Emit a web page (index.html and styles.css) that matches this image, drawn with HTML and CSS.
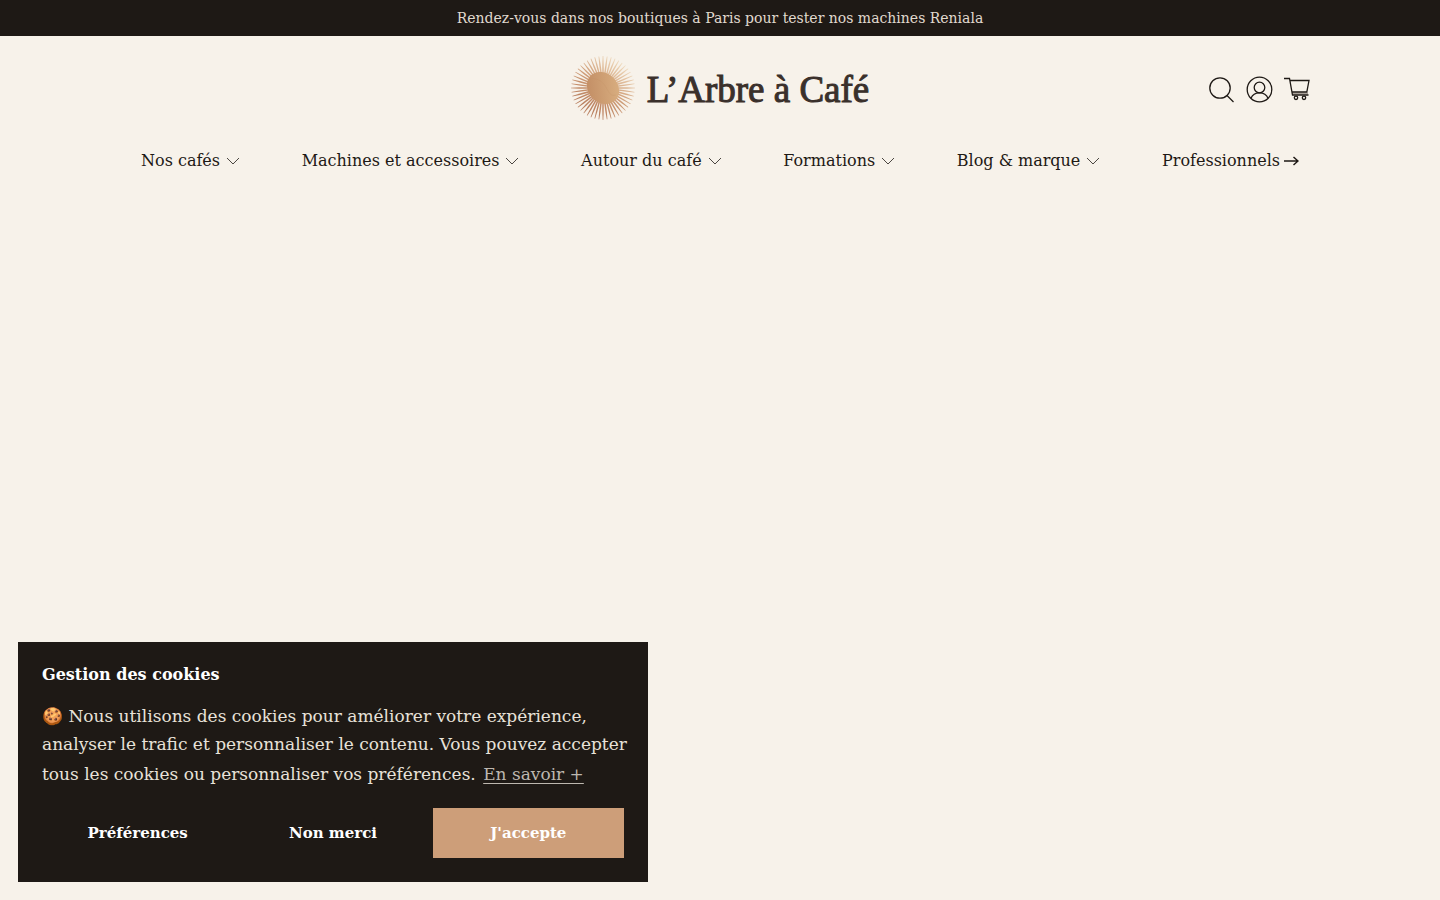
FILE: index.html
```html
<!DOCTYPE html>
<html lang="fr">
<head>
<meta charset="utf-8">
<meta name="viewport" content="width=device-width, initial-scale=1">
<title>L’Arbre à Café</title>
<link rel="stylesheet" href="styles.css">
</head>
<body>
<p class="announcement">Rendez-vous dans nos boutiques à Paris pour tester nos machines Reniala</p>
<header class="header">
  <div class="header-top">
    <a class="logo" href="#">
      <svg class="logo-mark" viewBox="-32 -32 64 64" aria-hidden="true">
        <defs>
          <linearGradient id="rays-fill" gradientUnits="userSpaceOnUse" x1="20" y1="-25" x2="-14" y2="20">
            <stop offset="0" stop-color="#efdabc"/><stop offset=".55" stop-color="#cf9d78"/><stop offset="1" stop-color="#b9805f"/>
          </linearGradient>
          <linearGradient id="bean-fill" x1="1" y1="0" x2="0" y2="1">
            <stop offset="0" stop-color="#dcb384"/><stop offset="1" stop-color="#bf8961"/>
          </linearGradient>
          <path id="ray" d="M-.8-12L-.7-24L-.3-32H.3L.7-24L.8-12Z"/>
          <g id="ray-set">
            <use href="#ray"/><use href="#ray" transform="rotate(7.500)"/><use href="#ray" transform="rotate(15)"/><use href="#ray" transform="rotate(22.500)"/>
          </g>
          <mask id="burst" maskUnits="userSpaceOnUse" x="-32" y="-32" width="64" height="64">
            <g fill="#fff">
              <use href="#ray-set"/><use href="#ray-set" transform="rotate(30)"/><use href="#ray-set" transform="rotate(60)"/><use href="#ray-set" transform="rotate(90)"/><use href="#ray-set" transform="rotate(120)"/><use href="#ray-set" transform="rotate(150)"/><use href="#ray-set" transform="rotate(180)"/><use href="#ray-set" transform="rotate(210)"/><use href="#ray-set" transform="rotate(240)"/><use href="#ray-set" transform="rotate(270)"/><use href="#ray-set" transform="rotate(300)"/><use href="#ray-set" transform="rotate(330)"/>
            </g>
          </mask>
        </defs>
        <circle r="32" fill="url(#rays-fill)" mask="url(#burst)"/>
        <ellipse rx="17.500" ry="14.500" transform="rotate(45)" fill="url(#bean-fill)"/>
        <path d="M-13-9C-5-11 1-5 4 1C7 7 9 8 13 7" fill="none" stroke="#bd8861" stroke-width=".6" opacity=".3"/>
      </svg>
      <span class="logo-name">L’Arbre à Café</span>
    </a>
    <div class="tools">
      <button class="tool" type="button" aria-label="Rechercher">
        <svg viewBox="0 0 28 28"><circle cx="12" cy="13" r="10.200"/><path d="M19 20.500L25.500 27"/></svg>
      </button>
      <a class="tool" href="#" aria-label="Compte">
        <svg viewBox="0 0 28 28"><circle cx="13.500" cy="14.500" r="12.300"/><circle cx="13.500" cy="12.500" r="5.300"/><path d="M5 23.300C6.500 19.500 9.500 17.800 13.500 17.800S20.500 19.500 22 23.300"/></svg>
      </a>
      <a class="tool" href="#" aria-label="Panier">
        <svg viewBox="0 0 28 28"><path class="cart-shelf" d="M8.500 18.500H24"/><path d="M0 3.500H5.500L8.500 20H24.500M6 5.500H25L22.800 17H8"/><circle cx="12" cy="22.800" r="1.700"/><circle cx="20" cy="22.800" r="1.700"/></svg>
      </a>
    </div>
  </div>
  <nav class="nav" aria-label="Menu principal">
    <a href="#">Nos cafés<svg class="chevron" viewBox="0 0 14 8"><path d="M1 1L7 7L13 1"/></svg></a>
    <a href="#">Machines et accessoires<svg class="chevron" viewBox="0 0 14 8"><path d="M1 1L7 7L13 1"/></svg></a>
    <a href="#">Autour du café<svg class="chevron" viewBox="0 0 14 8"><path d="M1 1L7 7L13 1"/></svg></a>
    <a href="#">Formations<svg class="chevron" viewBox="0 0 14 8"><path d="M1 1L7 7L13 1"/></svg></a>
    <a href="#">Blog &amp; marque<svg class="chevron" viewBox="0 0 14 8"><path d="M1 1L7 7L13 1"/></svg></a>
    <a class="pro" href="#">Professionnels<svg class="arrow" viewBox="0 0 15 10"><path d="M0 5H14M9.500 1L14 5L9.500 9"/></svg></a>
  </nav>
</header>
<section class="cookies" role="dialog" aria-labelledby="cookies-title">
  <h2 id="cookies-title">Gestion des cookies</h2>
  <p>🍪 Nous utilisons des cookies pour améliorer votre expérience, analyser le trafic et personnaliser le contenu. Vous pouvez accepter tous les cookies ou personnaliser vos préférences. <a href="#">En savoir +</a></p>
  <div class="choices">
    <button type="button">Préférences</button>
    <button type="button">Non merci</button>
    <button class="accept" type="button">J'accepte</button>
  </div>
</section>
</body>
</html>
```
FILE: styles.css
```css
* { box-sizing: border-box; }
body {
  margin: 0;
  min-height: 100vh;
  background: #f7f2ea;
  color: #1e1915;
  font-family: "DejaVu Serif", serif;
}
a { color: inherit; text-decoration: none; }
button { border: 0; background: none; color: inherit; font: inherit; cursor: pointer; }
.announcement {
  margin: 0;
  padding: 0 16px;
  background: #1e1915;
  color: #e0d9cf;
  font-size: 14px;
  line-height: 36px;
  text-align: center;
}
.header { padding: 18px 128px 0; }
.header-top {
  display: grid;
  grid-template-columns: 1fr auto 1fr;
  align-items: center;
}
.logo {
  grid-column: 2;
  display: flex;
  align-items: center;
  gap: 12px;
}
.logo-mark { width: 64px; height: 64px; }
.logo-name {
  padding-top: 4px;
  color: #3a302b;
  font-family: "Liberation Serif", serif;
  font-size: 37px;
  line-height: 64px;
  white-space: nowrap;
  -webkit-text-stroke: 1px #3a302b;
}
.tools { display: flex; justify-content: flex-end; gap: 10px; padding-top: 2px; }
.tool { display: block; width: 28px; height: 28px; padding: 0; }
.tool svg {
  display: block;
  width: 28px;
  height: 28px;
  fill: none;
  stroke: #1e1915;
  stroke-width: 1.3;
}
.tool .cart-shelf { stroke: #a9a199; stroke-width: 2; }
.nav {
  display: flex;
  justify-content: space-between;
  padding: 27px 13px 0;
  font-size: 16px;
  line-height: 24px;
}
.nav a { display: flex; align-items: center; gap: 6px; white-space: nowrap; }
.nav .pro { gap: 4px; }
.nav svg { fill: none; stroke: #1e1915; }
.chevron { width: 14px; height: 8px; stroke-width: .8; }
.arrow { width: 15px; height: 10px; stroke-width: 1.5; }
.cookies {
  position: fixed;
  left: 18px;
  bottom: 18px;
  width: 630px;
  max-width: calc(100% - 36px);
  padding: 20px 24px 24px;
  background: #1e1915;
  color: #fff;
}
.cookies h2 {
  margin: 0 0 14px;
  font-size: 16px;
  line-height: 26px;
}
.cookies p {
  margin: 0 -8px 18px 0;
  color: #e8e2d9;
  font-size: 17px;
  line-height: 28px;
}
.cookies p a {
  display: inline-block;
  margin-left: 2px;
  padding: 2px 0;
  color: #bdb7af;
  text-decoration: underline;
  text-underline-offset: 3px;
}
.choices { display: grid; grid-template-columns: repeat(3, 1fr); gap: 4px; }
.choices button {
  height: 50px;
  font-size: 15px;
  font-weight: 700;
}
.choices .accept { background: #cd9e79; }
```
